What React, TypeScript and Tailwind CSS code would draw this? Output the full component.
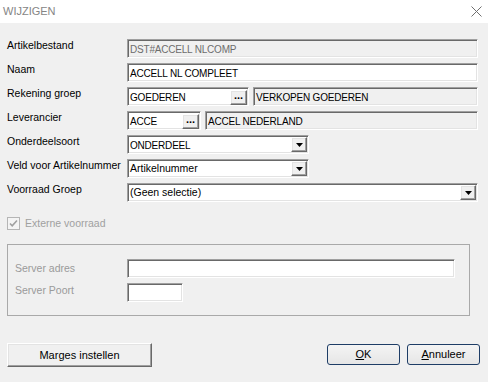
import React from "react";

const sunken =
  "border border-t-[#a0a0a0] border-l-[#a0a0a0] border-b-white border-r-white shadow-[inset_1px_1px_0_#696969,inset_-1px_-1px_0_#e3e3e3]";
const raised =
  "border border-t-white border-l-white border-b-[#696969] border-r-[#696969] shadow-[inset_-1px_-1px_0_#a0a0a0,inset_1px_1px_0_#e3e3e3] bg-[#f0f0f0]";

// uppercase values run narrower in the original font
const caps = "text-[10px] tracking-[-0.2px]";

function Row({ label, children }: { label: string; children: React.ReactNode }) {
  return (
    <div className="flex h-[19px] items-start">
      <span className="w-[120px] shrink-0 leading-[13px] text-black">{label}</span>
      {children}
    </div>
  );
}

function Field({
  value,
  width,
  readOnly,
  dim,
}: {
  value?: string;
  width: string;
  readOnly?: boolean;
  dim?: boolean;
}) {
  return (
    <div
      className={`${sunken} ${width} flex h-[19px] items-center pl-[2px] pt-[1px] ${caps} ${
        readOnly ? "bg-[#f0f0f0]" : "bg-white"
      } ${dim ? "text-[#6d6d6d]" : "text-black"}`}
    >
      {value}
    </div>
  );
}

function LookupField({ value, width }: { value: string; width: string }) {
  return (
    <div className={`${sunken} ${width} flex h-[19px] items-center bg-white pl-[2px] pt-[1px]`}>
      <span className={`flex-1 ${caps}`}>{value}</span>
      <span
        className={`${raised} mr-[1px] flex h-[15px] w-[17px] items-center justify-center pb-[4px] text-[11px] font-bold leading-none`}
      >
        ...
      </span>
    </div>
  );
}

function Combo({ value, width, upper }: { value: string; width: string; upper?: boolean }) {
  return (
    <div className={`${sunken} ${width} flex h-[19px] items-center bg-white pl-[2px]`}>
      <span className={`flex-1 pt-[1px] ${upper ? caps : ""}`}>{value}</span>
      <span className={`${raised} mr-[1px] flex h-[15px] w-[16px] items-center justify-center`}>
        <svg width="7" height="4" viewBox="0 0 7 4">
          <path d="M0 0h7L3.5 4z" fill="#000" />
        </svg>
      </span>
    </div>
  );
}

export default function App() {
  return (
    <div
      className="h-[382px] w-[488px] overflow-hidden bg-[#f0f0f0] text-[10.5px]"
      style={{ fontFamily: '"Liberation Sans", Arial, sans-serif' }}
    >
      <div className="flex h-[23px] items-center justify-between bg-white pl-[3px] pr-[6px]">
        <span className="text-[11px] text-[#858585]">WIJZIGEN</span>
        <svg width="11" height="11" viewBox="0 0 11 11">
          <path d="M0.5 0.5l10 10M10.5 0.5l-10 10" stroke="#6f6f6f" strokeWidth="1" />
        </svg>
      </div>

      <div className="pl-[7px] pt-[16px]">
        <div className="flex flex-col gap-[5px]">
          <Row label="Artikelbestand">
            <Field value="DST#ACCELL NLCOMP" width="w-[351px]" readOnly dim />
          </Row>
          <Row label="Naam">
            <Field value="ACCELL NL COMPLEET" width="w-[351px]" />
          </Row>
          <Row label="Rekening groep">
            <LookupField value="GOEDEREN" width="w-[122px]" />
            <div className="ml-[4px]">
              <Field value="VERKOPEN GOEDEREN" width="w-[225px]" readOnly />
            </div>
          </Row>
          <Row label="Leverancier">
            <LookupField value="ACCE" width="w-[74px]" />
            <div className="ml-[4px]">
              <Field value="ACCEL NEDERLAND" width="w-[273px]" readOnly />
            </div>
          </Row>
          <Row label="Onderdeelsoort">
            <Combo value="ONDERDEEL" width="w-[182px]" upper />
          </Row>
          <Row label="Veld voor Artikelnummer">
            <Combo value="Artikelnummer" width="w-[182px]" />
          </Row>
          <Row label="Voorraad Groep">
            <Combo value="(Geen selectie)" width="w-[351px]" />
          </Row>
        </div>

        <div className="mt-[15px] flex h-[13px] items-center gap-[5px]">
          <span className="flex h-[13px] w-[13px] items-center justify-center border border-[#b5b5b5] bg-[#f4f4f4]">
            <svg width="9" height="9" viewBox="0 0 9 9">
              <path d="M1 4.5l2.2 2.3L8 1.5" stroke="#a0a0a0" strokeWidth="1.6" fill="none" />
            </svg>
          </span>
          <span className="text-[#a0a0a0]">Externe voorraad</span>
        </div>

        <div className="mt-[14px] h-[72px] w-[463px] border border-[#a9a9a9] pl-[7px] pt-[14px]">
          <div className="flex flex-col gap-[5px]">
            <div className="flex h-[19px] items-start">
              <span className="w-[112px] shrink-0 pt-[3px] leading-[13px] text-[#9a9a9a]">Server adres</span>
              <Field width="w-[328px]" />
            </div>
            <div className="flex h-[19px] items-start">
              <span className="w-[112px] shrink-0 pt-[1px] leading-[13px] text-[#9a9a9a]">Server Poort</span>
              <Field width="w-[56px]" />
            </div>
          </div>
        </div>

        <div className="mt-[27px] flex w-[473px] items-start justify-between">
          <button className={`${raised} h-[24px] w-[145px] text-[11px] text-black`}>
            Marges instellen
          </button>
          <div className="flex gap-[7px] pt-[1px]">
            <button className="h-[21px] w-[73px] rounded-[3px] border border-[#1e3d66] bg-gradient-to-b from-[#f4f4f4] to-[#e6e6e6] text-[11px] text-black">
              <span className="underline underline-offset-1">O</span>K
            </button>
            <button className="h-[21px] w-[73px] rounded-[3px] border border-[#1e3d66] bg-gradient-to-b from-[#f4f4f4] to-[#e6e6e6] text-[11px] text-black">
              <span className="underline underline-offset-1">A</span>nnuleer
            </button>
          </div>
        </div>
      </div>
    </div>
  );
}
